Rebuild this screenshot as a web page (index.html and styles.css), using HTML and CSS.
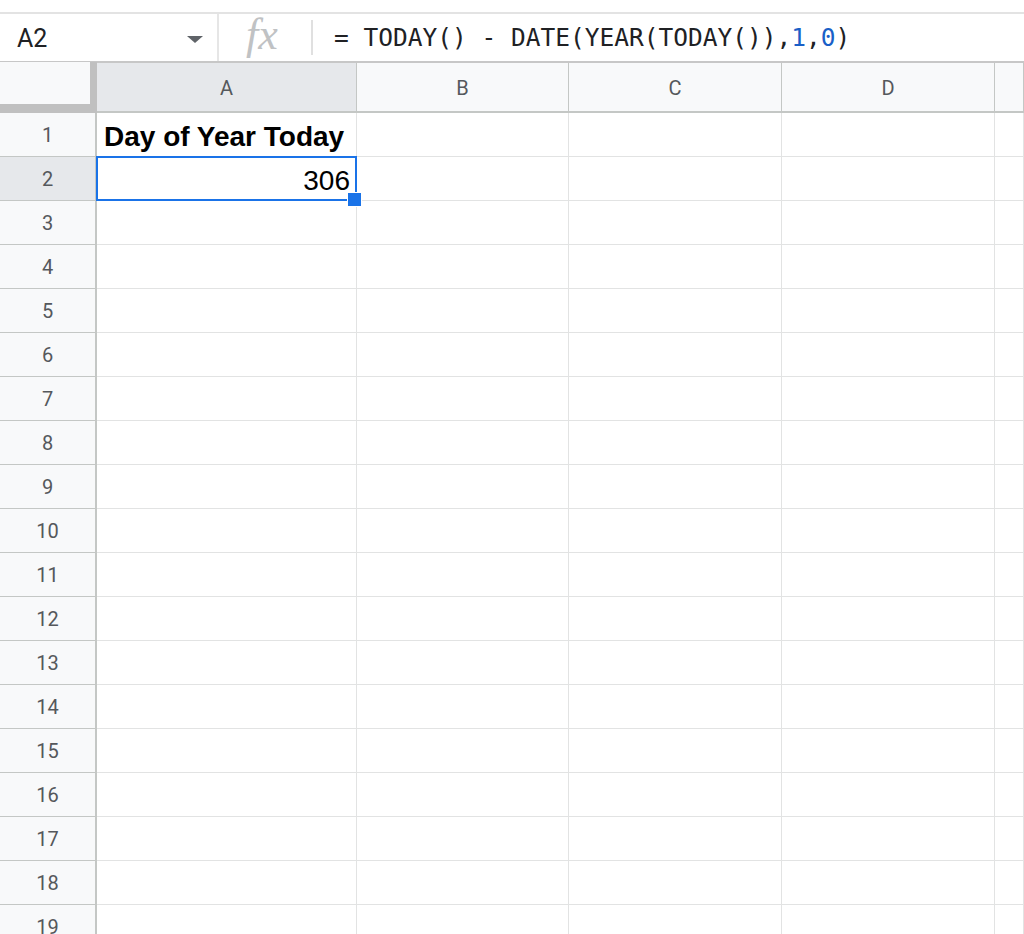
FILE: index.html
```html
<!DOCTYPE html>
<html>
<head>
<meta charset="utf-8">
<link rel="stylesheet" href="styles.css">
</head>
<body>
<div class="topstrip"></div>
<div class="formula-bar">
  <div class="namebox">
    <span class="name">A2</span>
    <span class="caret"></span>
  </div>
  <div class="fx"><span class="fx-text">fx</span></div>
  <div class="formula">= TODAY() - DATE(YEAR(TODAY()),<span class="num">1</span>,<span class="num">0</span>)</div>
</div>
<div class="sheet" id="sheet">
  <div class="corner"></div>
  <div class="colhead sel">A</div>
  <div class="colhead">B</div>
  <div class="colhead">C</div>
  <div class="colhead">D</div>
  <div class="colhead"></div>

  <div class="rowhead">1</div>
  <div class="cell bold">Day of Year Today</div>
  <div class="cell"></div><div class="cell"></div><div class="cell"></div><div class="cell"></div>

  <div class="rowhead sel">2</div>
  <div class="cell num-cell active">306</div>
  <div class="cell"></div><div class="cell"></div><div class="cell"></div><div class="cell"></div>

  <div class="rowhead">3</div><div class="cell"></div><div class="cell"></div><div class="cell"></div><div class="cell"></div><div class="cell"></div>
  <div class="rowhead">4</div><div class="cell"></div><div class="cell"></div><div class="cell"></div><div class="cell"></div><div class="cell"></div>
  <div class="rowhead">5</div><div class="cell"></div><div class="cell"></div><div class="cell"></div><div class="cell"></div><div class="cell"></div>
  <div class="rowhead">6</div><div class="cell"></div><div class="cell"></div><div class="cell"></div><div class="cell"></div><div class="cell"></div>
  <div class="rowhead">7</div><div class="cell"></div><div class="cell"></div><div class="cell"></div><div class="cell"></div><div class="cell"></div>
  <div class="rowhead">8</div><div class="cell"></div><div class="cell"></div><div class="cell"></div><div class="cell"></div><div class="cell"></div>
  <div class="rowhead">9</div><div class="cell"></div><div class="cell"></div><div class="cell"></div><div class="cell"></div><div class="cell"></div>
  <div class="rowhead">10</div><div class="cell"></div><div class="cell"></div><div class="cell"></div><div class="cell"></div><div class="cell"></div>
  <div class="rowhead">11</div><div class="cell"></div><div class="cell"></div><div class="cell"></div><div class="cell"></div><div class="cell"></div>
  <div class="rowhead">12</div><div class="cell"></div><div class="cell"></div><div class="cell"></div><div class="cell"></div><div class="cell"></div>
  <div class="rowhead">13</div><div class="cell"></div><div class="cell"></div><div class="cell"></div><div class="cell"></div><div class="cell"></div>
  <div class="rowhead">14</div><div class="cell"></div><div class="cell"></div><div class="cell"></div><div class="cell"></div><div class="cell"></div>
  <div class="rowhead">15</div><div class="cell"></div><div class="cell"></div><div class="cell"></div><div class="cell"></div><div class="cell"></div>
  <div class="rowhead">16</div><div class="cell"></div><div class="cell"></div><div class="cell"></div><div class="cell"></div><div class="cell"></div>
  <div class="rowhead">17</div><div class="cell"></div><div class="cell"></div><div class="cell"></div><div class="cell"></div><div class="cell"></div>
  <div class="rowhead">18</div><div class="cell"></div><div class="cell"></div><div class="cell"></div><div class="cell"></div><div class="cell"></div>
  <div class="rowhead">19</div><div class="cell"></div><div class="cell"></div><div class="cell"></div><div class="cell"></div><div class="cell"></div>
</div>
</body>
</html>
```
FILE: styles.css
```css
* { box-sizing: border-box; }
html, body {
  margin: 0;
  padding: 0;
  background: #ffffff;
  overflow: hidden;
  height: 934px;
}
body {
  font-family: Roboto, "Liberation Sans", Arial, sans-serif;
  color: #000;
}
.topstrip {
  height: 12px;
  background: #ffffff;
}
.formula-bar {
  display: flex;
  align-items: stretch;
  height: 51px;
  border-top: 2px solid #e3e3e3;
  border-bottom: 2px solid #c7c7c7;
  background: #fff;
}
.namebox {
  width: 219px;
  display: flex;
  align-items: center;
  justify-content: space-between;
  padding-left: 17px;
  padding-right: 14px;
  border-right: 2px solid #e6e6e6;
}
.name {
  font-family: Roboto, "Liberation Sans", sans-serif;
  font-size: 25px;
  color: #202124;
  margin-top: 1px;
}
.caret {
  width: 0;
  height: 0;
  border-left: 8px solid transparent;
  border-right: 8px solid transparent;
  border-top: 7px solid #5f6368;
  margin-top: 3px;
}
.fx {
  width: 94px;
  display: flex;
  align-items: center;
  justify-content: center;
  padding: 6px 0;
}
.fx-text {
  flex: 1;
  height: 100%;
  display: flex;
  align-items: center;
  justify-content: center;
  border-right: 2px solid #e0e0e0;
  font-family: "Liberation Serif", "DejaVu Serif", serif;
  font-style: italic;
  font-size: 44px;
  color: #c0c2c4;
  padding-right: 6px;
  padding-bottom: 6px;
  line-height: 1;
}
.formula {
  display: flex;
  align-items: center;
  padding-left: 21px;
  font-family: "DejaVu Sans Mono", "Liberation Mono", monospace;
  font-size: 24.5px;
  color: #202124;
  white-space: pre;
  letter-spacing: 0;
}
.formula .num { color: #1a5fc7; }

.sheet {
  display: grid;
  grid-template-columns: 97px 260px 212px 213px 213px 1fr;
  grid-template-rows: 50px;
  grid-auto-rows: 44px;
}
.corner {
  background: #f8f9fa;
  border-right: 7px solid #c0c0c0;
  border-bottom: 9px solid #c0c0c0;
  margin-top: -1px;
}
.colhead {
  background: #f8f9fa;
  border-right: 1px solid #c4c7c5;
  border-bottom: 2px solid #c4c7c5;
  display: flex;
  align-items: center;
  justify-content: center;
  font-family: Roboto, "Liberation Sans", sans-serif;
  font-size: 20px;
  color: #55585c;
  padding-top: 1px;
}
.colhead.sel { background: #e6e8eb; }
.rowhead {
  background: #f8f9fa;
  border-right: 2px solid #c4c7c5;
  border-bottom: 1px solid #c4c7c5;
  display: flex;
  align-items: center;
  justify-content: center;
  font-family: Roboto, "Liberation Sans", sans-serif;
  font-size: 20px;
  color: #55585c;
  padding-top: 1px;
}
.rowhead.sel { background: #e6e8eb; }
.cell {
  border-right: 1px solid #e2e3e3;
  border-bottom: 1px solid #e2e3e3;
  display: flex;
  align-items: center;
  padding: 4px 6px 0 7px;
  font-family: "Liberation Sans", Arial, sans-serif;
  font-size: 28px;
  color: #000;
  white-space: nowrap;
  position: relative;
}
.cell.bold { font-weight: bold; }
.cell.num-cell { justify-content: flex-end; padding-right: 6px; }
.cell.active::after {
  content: "";
  position: absolute;
  left: -1px;
  top: -1px;
  right: -1px;
  bottom: -1px;
  border: 2px solid #1a73e8;
  pointer-events: none;
}
.cell.active::before {
  content: "";
  position: absolute;
  right: -6px;
  bottom: -7px;
  width: 13px;
  height: 13px;
  background: #1a73e8;
  border: 1px solid #ffffff;
  z-index: 2;
}
```
